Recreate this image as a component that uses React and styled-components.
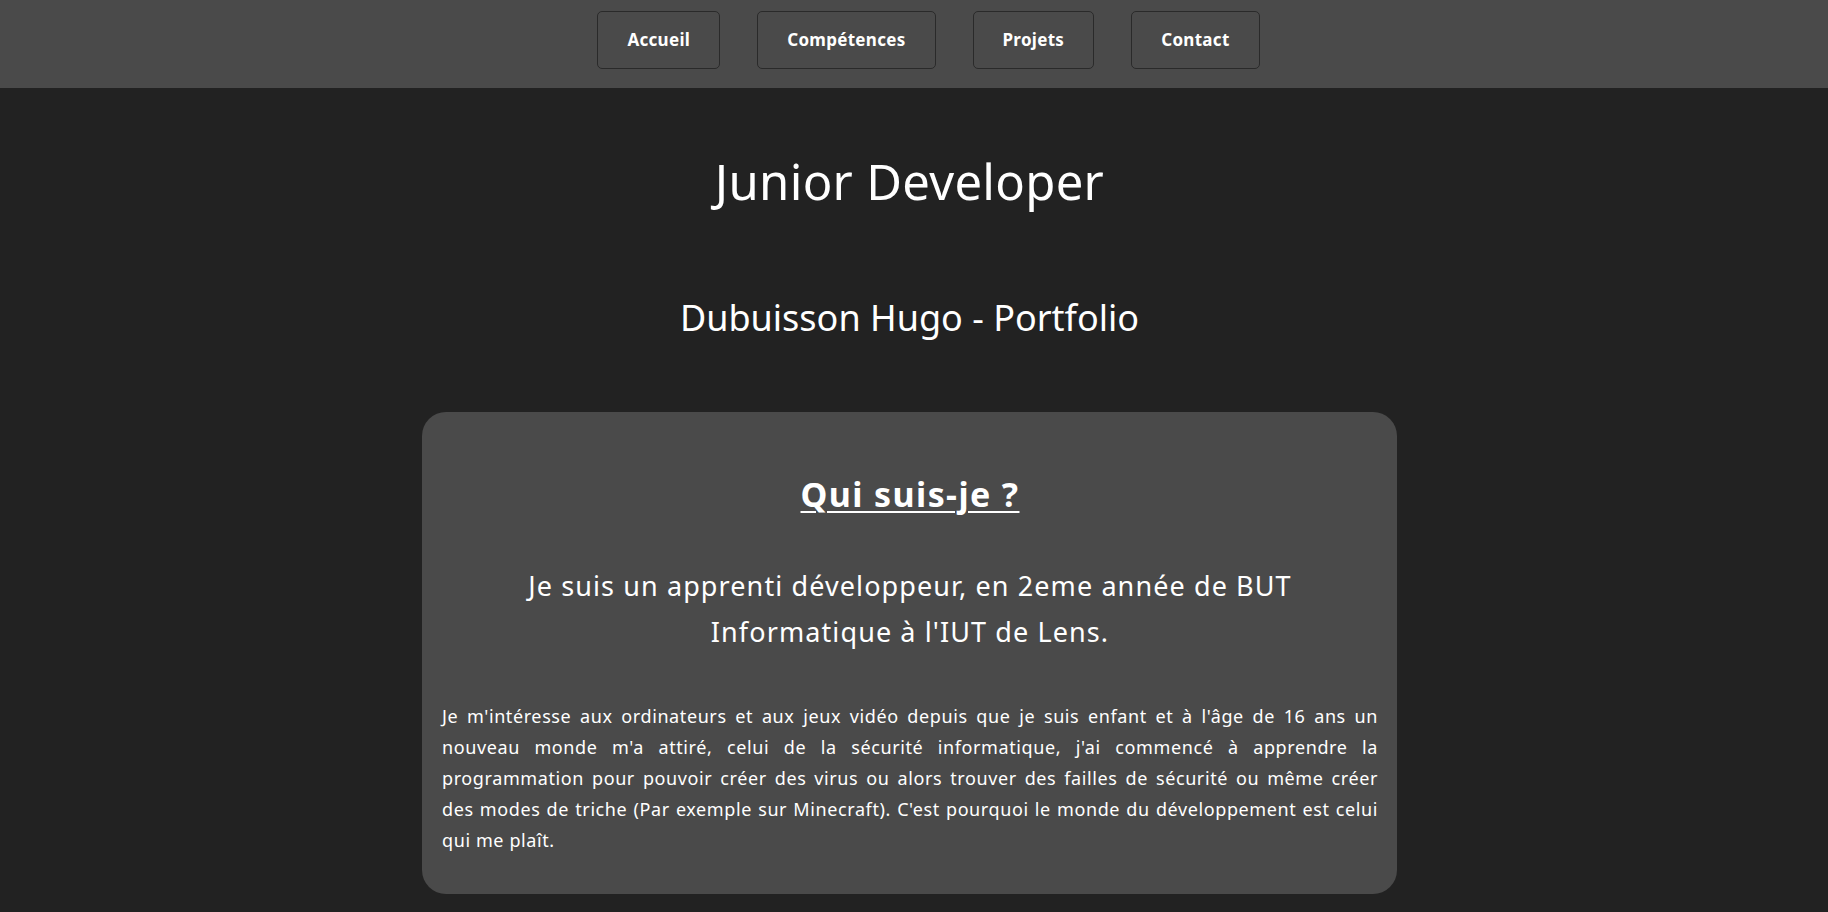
import styled, { createGlobalStyle } from 'styled-components';

const GlobalStyle = createGlobalStyle`
  * {
    box-sizing: border-box;
  }

  body {
    margin: 0;
    background: #222222;
    color: #ffffff;
    font-family: 'Noto Sans', 'Open Sans', sans-serif;
  }
`;

const links = ['Accueil', 'Compétences', 'Projets', 'Contact'];

const App = () => {
  return (
    <>
      <GlobalStyle />
      <NavBar>
        <ul>
          {links.map((link) => (
            <li key={link}>
              <NavButton href={`#${link.toLowerCase()}`}>{link}</NavButton>
            </li>
          ))}
        </ul>
      </NavBar>
      <Main>
        <Title>Junior Developer</Title>
        <Subtitle>Dubuisson Hugo - Portfolio</Subtitle>
        <Card>
          <CardTitle>Qui suis-je ?</CardTitle>
          <Intro>
            Je suis un apprenti développeur, en 2eme année de BUT Informatique à
            l'IUT de Lens.
          </Intro>
          <Text>
            Je m'intéresse aux ordinateurs et aux jeux vidéo depuis que je suis
            enfant et à l'âge de 16 ans un nouveau monde m'a attiré, celui de la
            sécurité informatique, j'ai commencé à apprendre la programmation
            pour pouvoir créer des virus ou alors trouver des failles de
            sécurité ou même créer des&nbsp;modes de triche (Par exemple sur
            Minecraft). C'est pourquoi le monde du développement est celui qui
            me plaît.
          </Text>
        </Card>
      </Main>
    </>
  );
};

const NavBar = styled.nav`
  height: 88px;
  padding-top: 11px;
  background: #4a4a4a;
  display: flex;
  align-items: flex-start;
  justify-content: center;

  ul {
    display: flex;
    gap: 37px;
    list-style: none;
    margin: 0;
    padding: 0 0 0 29px;
  }
`;

const NavButton = styled.a`
  display: flex;
  align-items: center;
  justify-content: center;
  height: 58px;
  padding: 0 29px 1px;
  border: 1px solid #2a2a2a;
  border-radius: 5px;
  color: #ffffff;
  text-decoration: none;
  font-size: 17px;
  font-weight: 700;
  letter-spacing: 0.3px;
`;

const Main = styled.main`
  display: flex;
  flex-direction: column;
  align-items: center;
  padding: 64px 9px 40px 0;
`;

const Title = styled.h1`
  margin: 0;
  font-size: 49px;
  font-weight: 400;
  line-height: 1.2;
  letter-spacing: 0.3px;
`;

const Subtitle = styled.h2`
  margin: 85px 0 0;
  font-size: 36px;
  font-weight: 400;
  line-height: 1.2;
`;

const Card = styled.section`
  width: 975px;
  margin-top: 73px;
  padding: 62px 19px 38px 20px;
  background: #4a4a4a;
  border-radius: 24px;
  display: flex;
  flex-direction: column;
  align-items: center;
`;

const CardTitle = styled.h2`
  margin: 0;
  font-size: 34px;
  font-weight: 700;
  line-height: 1.2;
  letter-spacing: 1.4px;
  text-decoration: underline;
  text-underline-offset: 4px;
  text-decoration-thickness: 2px;
`;

const Intro = styled.p`
  margin: 48px 0 0;
  max-width: 800px;
  font-size: 27px;
  line-height: 46px;
  letter-spacing: 1.1px;
  text-align: center;
`;

const Text = styled.p`
  margin: 46px 0 0;
  font-size: 18px;
  line-height: 31px;
  letter-spacing: 0.6px;
  text-align: justify;
`;

export default App;
